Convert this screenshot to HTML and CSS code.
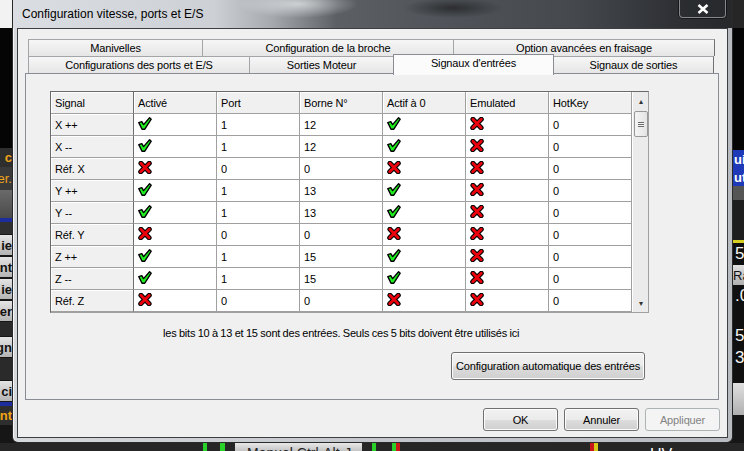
FILE: index.html
```html
<!DOCTYPE html>
<html lang="fr">
<head>
    <meta charset="UTF-8">
    <title>Configuration vitesse, ports et E/S</title>
    <link rel="stylesheet" href="styles.css">
</head>
<body>
    <svg class="defs" width="0" height="0">
        <symbol id="ok" viewBox="0 0 14 13">
            <path d="M0.8 5.6 L3.8 4.6 L5.6 7.6 L11.6 0.8 L13.2 2.2 L6.8 12.2 L4 12.2 Z" fill="#1ff01f" stroke="#000" stroke-width="1.4" stroke-linejoin="round"/>
        </symbol>
        <symbol id="no" viewBox="0 0 13 13">
            <path d="M2.4 2.2 L10.6 10.8 M10.8 2.2 L2.2 10.8" stroke="#000" stroke-width="5" stroke-linecap="round"/>
            <path d="M2.4 2.2 L10.6 10.8 M10.8 2.2 L2.2 10.8" stroke="#ec000c" stroke-width="2.8" stroke-linecap="round"/>
        </symbol>
        <symbol id="close" viewBox="0 0 12 10">
            <path d="M1.5 1 L10.5 9 M10.5 1 L1.5 9" stroke="#fff" stroke-width="2.6"/>
        </symbol>
    </svg>

    <div class="desk">
        <!-- bits of the Mach3 screen behind the dialog -->
        <div class="side side-left">
            <div class="blk b-white"></div>
            <div class="blk b-black"></div>
            <div class="blk b-dark orange">c</div>
            <div class="blk b-dark2 orange thin">er.</div>
            <div class="blk b-grey"></div>
            <div class="blk b-blue"></div>
            <div class="blk b-gap"></div>
            <div class="blk b-key">ie</div>
            <div class="blk b-key">ent</div>
            <div class="blk b-key">ie</div>
            <div class="blk b-key">er</div>
            <div class="blk b-gap2"></div>
            <div class="blk b-key">gn</div>
            <div class="blk b-gap3"></div>
            <div class="blk b-key">ci</div>
            <div class="blk b-blue"></div>
            <div class="blk b-dark orange">nt</div>
        </div>

        <div class="win">
            <div class="titlebar">
                <span class="title">Configuration vitesse, ports et E/S</span>
                <span class="close"><svg class="close-x"><use href="#close"/></svg></span>
            </div>

            <div class="client">
                <div class="tabs">
                    <div class="tabrow">
                        <div class="tab w175">Manivelles</div>
                        <div class="tab w252">Configuration de la broche</div>
                        <div class="tab w262">Option avancées en fraisage</div>
                    </div>
                    <div class="tabrow">
                        <div class="tab w222">Configurations des ports et E/S</div>
                        <div class="tab w145">Sorties Moteur</div>
                        <div class="tab w161 active">Signaux d'entrées</div>
                        <div class="tab w161">Signaux de sorties</div>
                    </div>

                    <div class="page">
                        <div class="grid">
                            <div class="cells">
                                <div class="hd">Signal</div>
                                <div class="hd">Activé</div>
                                <div class="hd">Port</div>
                                <div class="hd">Borne N°</div>
                                <div class="hd">Actif à 0</div>
                                <div class="hd">Emulated</div>
                                <div class="hd">HotKey</div>

                                <div class="rh">X ++</div>
                                <div class="c"><svg class="ico"><use href="#ok"/></svg></div>
                                <div class="c">1</div><div class="c">12</div>
                                <div class="c"><svg class="ico"><use href="#ok"/></svg></div>
                                <div class="c"><svg class="ico"><use href="#no"/></svg></div>
                                <div class="c">0</div>

                                <div class="rh">X --</div>
                                <div class="c"><svg class="ico"><use href="#ok"/></svg></div>
                                <div class="c">1</div><div class="c">12</div>
                                <div class="c"><svg class="ico"><use href="#ok"/></svg></div>
                                <div class="c"><svg class="ico"><use href="#no"/></svg></div>
                                <div class="c">0</div>

                                <div class="rh">Réf. X</div>
                                <div class="c"><svg class="ico"><use href="#no"/></svg></div>
                                <div class="c">0</div><div class="c">0</div>
                                <div class="c"><svg class="ico"><use href="#no"/></svg></div>
                                <div class="c"><svg class="ico"><use href="#no"/></svg></div>
                                <div class="c">0</div>

                                <div class="rh">Y ++</div>
                                <div class="c"><svg class="ico"><use href="#ok"/></svg></div>
                                <div class="c">1</div><div class="c">13</div>
                                <div class="c"><svg class="ico"><use href="#ok"/></svg></div>
                                <div class="c"><svg class="ico"><use href="#no"/></svg></div>
                                <div class="c">0</div>

                                <div class="rh">Y --</div>
                                <div class="c"><svg class="ico"><use href="#ok"/></svg></div>
                                <div class="c">1</div><div class="c">13</div>
                                <div class="c"><svg class="ico"><use href="#ok"/></svg></div>
                                <div class="c"><svg class="ico"><use href="#no"/></svg></div>
                                <div class="c">0</div>

                                <div class="rh">Réf. Y</div>
                                <div class="c"><svg class="ico"><use href="#no"/></svg></div>
                                <div class="c">0</div><div class="c">0</div>
                                <div class="c"><svg class="ico"><use href="#no"/></svg></div>
                                <div class="c"><svg class="ico"><use href="#no"/></svg></div>
                                <div class="c">0</div>

                                <div class="rh">Z ++</div>
                                <div class="c"><svg class="ico"><use href="#ok"/></svg></div>
                                <div class="c">1</div><div class="c">15</div>
                                <div class="c"><svg class="ico"><use href="#ok"/></svg></div>
                                <div class="c"><svg class="ico"><use href="#no"/></svg></div>
                                <div class="c">0</div>

                                <div class="rh">Z --</div>
                                <div class="c"><svg class="ico"><use href="#ok"/></svg></div>
                                <div class="c">1</div><div class="c">15</div>
                                <div class="c"><svg class="ico"><use href="#ok"/></svg></div>
                                <div class="c"><svg class="ico"><use href="#no"/></svg></div>
                                <div class="c">0</div>

                                <div class="rh">Réf. Z</div>
                                <div class="c"><svg class="ico"><use href="#no"/></svg></div>
                                <div class="c">0</div><div class="c">0</div>
                                <div class="c"><svg class="ico"><use href="#no"/></svg></div>
                                <div class="c"><svg class="ico"><use href="#no"/></svg></div>
                                <div class="c">0</div>
                            </div>
                            <div class="vscroll">
                                <div class="arrow">&#9652;</div>
                                <div class="thumb"><span class="grip"></span></div>
                                <div class="track"></div>
                                <div class="arrow">&#9662;</div>
                            </div>
                        </div>

                        <p class="note">les bits 10 à 13 et 15 sont des entrées. Seuls ces 5 bits doivent être utilisés ici</p>
                        <button class="btn btn-auto">Configuration automatique des entrées</button>
                    </div>
                </div>

                <div class="footer">
                    <button class="btn">OK</button>
                    <button class="btn">Annuler</button>
                    <button class="btn" disabled>Appliquer</button>
                </div>
            </div>
        </div>

        <div class="side side-right">
            <div class="blk r-top"></div>
            <div class="blk b-black r-black"></div>
            <div class="blk r-blue">ui</div>
            <div class="blk r-blue">ut</div>
            <div class="blk r-grey"></div>
            <div class="blk r-dark"></div>
            <div class="blk r-yellow"></div>
            <div class="blk r-num">5</div>
            <div class="blk r-key">Rà</div>
            <div class="blk r-num">.0</div>
            <div class="blk r-dark2"></div>
            <div class="blk r-num">5</div>
            <div class="blk r-num">3</div>
            <div class="blk r-dark3"></div>
            <div class="blk r-key r-key2"></div>
        </div>

        <div class="bottom">
            <span class="bb w203"></span>
            <span class="bb led-green w4"></span>
            <span class="bb w13"></span>
            <span class="bb led-green w5"></span>
            <span class="bb w10"></span>
            <span class="bb manual">Manuel Ctrl-Alt-J</span>
            <span class="bb w10"></span>
            <span class="bb led-green w4"></span>
            <span class="bb w16"></span>
            <span class="bb led-green w4"></span>
            <span class="bb led-red w4"></span>
            <span class="bb w190"></span>
            <span class="bb led-red w4"></span>
            <span class="bb led-yellow w4"></span>
            <span class="bb w52"></span>
            <span class="bb uv">UV <em>70</em></span>
        </div>
    </div>
</body>
</html>
```

FILE: styles.css
```css
* {
    box-sizing: border-box;
}

body {
    margin: 0;
    width: 744px;
    height: 451px;
    overflow: hidden;
    background: #161616;
    font-family: "Liberation Sans", Arial, sans-serif;
    font-size: 11px;
    color: #000;
}

.defs {
    position: absolute;
}

.desk {
    display: grid;
    grid-template-columns: 12px 721px 11px;
    grid-template-rows: 443px 8px;
}

/* background screen */
.side {
    display: flex;
    flex-direction: column;
    overflow: hidden;
    font-weight: bold;
    font-size: 13px;
}

.blk {
    flex: none;
    display: flex;
    align-items: center;
    justify-content: flex-end;
    overflow: hidden;
    white-space: nowrap;
}

.b-white { height: 28px; background: #f2f2f2; }
.b-black { height: 120px; background: #050505; }
.b-dark { height: 19px; background: #2e2e2e; }
.b-dark2 { height: 23px; background: #3a3a3a; }
.b-grey { height: 28px; background: linear-gradient(#6a6a6a, #4a4a4a); }
.b-blue { height: 4px; background: #1c2c9c; }
.b-gap { height: 12px; background: #303030; }
.b-gap2 { height: 14px; background: #2a2a2a; }
.b-gap3 { height: 22px; background: #2a2a2a; }
.b-key {
    height: 20px;
    margin: 1px 0;
    background: linear-gradient(#e4e4e4, #b4b4b4);
    color: #111;
}
.orange { color: #f0a418; }
.thin { font-weight: normal; }

.r-top { height: 28px; background: #262626; }
.r-black { height: 122px; }
.r-blue {
    height: 18px;
    justify-content: flex-start;
    padding-left: 1px;
    background: #1f3ab8;
    color: #fff;
}
.r-grey { height: 14px; background: #555; }
.r-dark { height: 40px; background: #1e1e1e; }
.r-yellow { height: 3px; background: #d8d020; }
.r-num {
    height: 22px;
    justify-content: flex-start;
    padding-left: 2px;
    background: #101010;
    color: #f4f4f4;
    font-size: 17px;
    font-weight: normal;
}
.r-key {
    height: 20px;
    justify-content: flex-start;
    background: linear-gradient(#e0e0e0, #b0b0b0);
    color: #111;
    font-weight: normal;
}
.r-dark2 { height: 18px; background: #101010; }
.r-dark3 { height: 14px; background: #101010; }
.r-key2 { height: 32px; }

.bottom {
    grid-column: 1 / -1;
    display: flex;
    background: #262626;
    overflow: hidden;
}

.bb { flex: none; height: 8px; }
.w4 { width: 4px; }
.w5 { width: 5px; }
.w10 { width: 10px; }
.w13 { width: 13px; }
.w16 { width: 16px; }
.w52 { width: 52px; }
.w190 { width: 190px; }
.w203 { width: 203px; }
.led-green { background: #28d228; }
.led-red { background: #c81818; }
.led-yellow { background: #d8c818; }

.manual {
    width: 127px;
    height: 8px;
    padding-left: 12px;
    background: linear-gradient(#e8e8e8, #c4c4c4);
    color: #222;
    font-size: 14px;
    line-height: 20px;
    overflow: hidden;
}

.uv {
    color: #fff;
    font-size: 16px;
    line-height: 24px;
    overflow: hidden;
    width: 60px;
}

.uv em {
    font-style: normal;
    font-size: 12px;
    color: #d8a020;
}

/* window frame */
.win {
    display: flex;
    flex-direction: column;
    padding: 0 4px 4px;
    border: 1px solid #2a2a2a;
    border-top: none;
    border-radius: 0 0 6px 6px;
    background: linear-gradient(to right, #d6d9dc, #c4c7cb 50%, #b8bcc0);
    box-shadow: inset 1px 0 #f4f6f8;
}

.titlebar {
    display: flex;
    align-items: flex-start;
    height: 28px;
    margin: 0 -4px;
    padding-left: 9px;
    background:
        radial-gradient(ellipse 60px 14px at 285px 4px, rgba(235, 238, 240, .7), rgba(235, 238, 240, 0)),
        radial-gradient(ellipse 50px 10px at 440px 8px, rgba(20, 20, 20, .6), rgba(20, 20, 20, 0)),
        linear-gradient(to right, #dadde1 0%, #cdd0d4 28%, #a6aaae 36%, #5c6064 45%, #50545a 60%, #45494d 78%, #2e3034 92%, #26282a 100%);
}

.title {
    padding-top: 7px;
    font-size: 12px;
    line-height: 15px;
    color: #000;
}

.close {
    display: flex;
    align-items: center;
    justify-content: center;
    width: 47px;
    height: 18px;
    margin-left: auto;
    margin-right: 6px;
    border: 1px solid rgba(210, 214, 218, .55);
    border-top: none;
    border-radius: 0 0 4px 4px;
    background: rgba(40, 42, 46, .35);
    box-shadow: 0 0 0 1px rgba(0, 0, 0, .5);
}

.close-x {
    width: 12px;
    height: 10px;
}

.client {
    height: 410px;
    border: 1px solid #3c3f42;
    background: #f0f0f0;
    letter-spacing: -0.15px;
}

/* tab control */
.tabs {
    margin: 10px 8px 0 7px;
}

.tabrow {
    display: flex;
    height: 17px;
    padding-left: 3px;
}

.tab {
    flex: none;
    display: flex;
    align-items: center;
    justify-content: center;
    height: 17px;
    margin-right: -1px;
    border: 1px solid #a3a5a9;
    border-bottom: none;
    border-right-color: #6f7175;
    background: linear-gradient(#f6f6f6, #e6e6e6);
    white-space: nowrap;
}

.tabrow .tab:last-child { margin-right: 0; }

.w145 { width: 145px; }
.w161 { width: 161px; }
.w175 { width: 175px; }
.w222 { width: 222px; }
.w252 { width: 252px; }
.w262 { width: 262px; }

.tab.active {
    position: relative;
    z-index: 1;
    height: 21px;
    margin-top: -2px;
    padding-bottom: 4px;
    border-color: #898c95;
    background: #fbfbfb;
}

.page {
    display: flex;
    flex-direction: column;
    align-items: flex-start;
    height: 327px;
    border: 1px solid #898c95;
    background: #f0f0f0;
}

/* data grid */
.grid {
    display: flex;
    margin: 17px 0 0 24px;
    border: 1px solid #a0a0a0;
    border-top-color: #696969;
    border-left-color: #696969;
    background: #fff;
}

.cells {
    display: grid;
    grid-template-columns: repeat(7, 83px);
    grid-auto-rows: 22px;
}

.hd,
.rh,
.c {
    display: flex;
    align-items: center;
    padding-left: 4px;
    border-right: 1px solid #a0a0a0;
    border-bottom: 1px solid #a0a0a0;
    white-space: nowrap;
}

.hd {
    background: #f0f0f0;
    box-shadow: inset 1px 1px #fff;
}

.hd:first-child,
.rh {
    border-right-color: #6e6e6e;
}

.rh {
    background: #f0f0f0;
    box-shadow: inset 1px 1px #fff;
}

.c {
    background: #fff;
}

.ico {
    width: 14px;
    height: 13px;
    margin-top: -3px;
}

.vscroll {
    display: flex;
    flex-direction: column;
    width: 16px;
    background: #ebebeb;
    border-left: 1px solid #fff;
}

.arrow {
    display: flex;
    align-items: center;
    justify-content: center;
    height: 18px;
    font-size: 8px;
    color: #333;
}

.thumb {
    display: flex;
    align-items: center;
    justify-content: center;
    height: 26px;
    margin: 1px 0 0 1px;
    width: 14px;
    border: 1px solid #979797;
    border-radius: 2px;
    background: linear-gradient(to right, #f4f4f4, #e4e4e4);
}

.grip {
    width: 6px;
    height: 5px;
    border-top: 1px solid #6a6a6a;
    border-bottom: 1px solid #6a6a6a;
    background: linear-gradient(#f4f4f4 40%, #6a6a6a 40%, #6a6a6a 60%, #f4f4f4 60%);
}

.track {
    flex: 1;
}

.note {
    margin: 14px 0 0 137px;
    line-height: 13px;
    letter-spacing: -0.2px;
    word-spacing: -0.4px;
}

/* buttons */
.btn {
    width: 75px;
    height: 23px;
    padding: 0;
    border: 1px solid #707070;
    border-radius: 3px;
    background: linear-gradient(#f2f2f2 0%, #ebebeb 50%, #dddddd 51%, #cfcfcf 100%);
    box-shadow: inset 0 0 0 1px #fcfcfc;
    font-family: inherit;
    font-size: 11px;
    letter-spacing: -0.15px;
    color: #000;
}

.btn:disabled {
    border-color: #adb2b5;
    background: #f4f4f4;
    box-shadow: none;
    color: #838383;
}

.btn-auto {
    width: 194px;
    height: 28px;
    margin: 12px 0 0 425px;
}

.footer {
    display: flex;
    justify-content: flex-end;
    gap: 6px;
    margin-top: 8px;
    padding-right: 7px;
}
```
